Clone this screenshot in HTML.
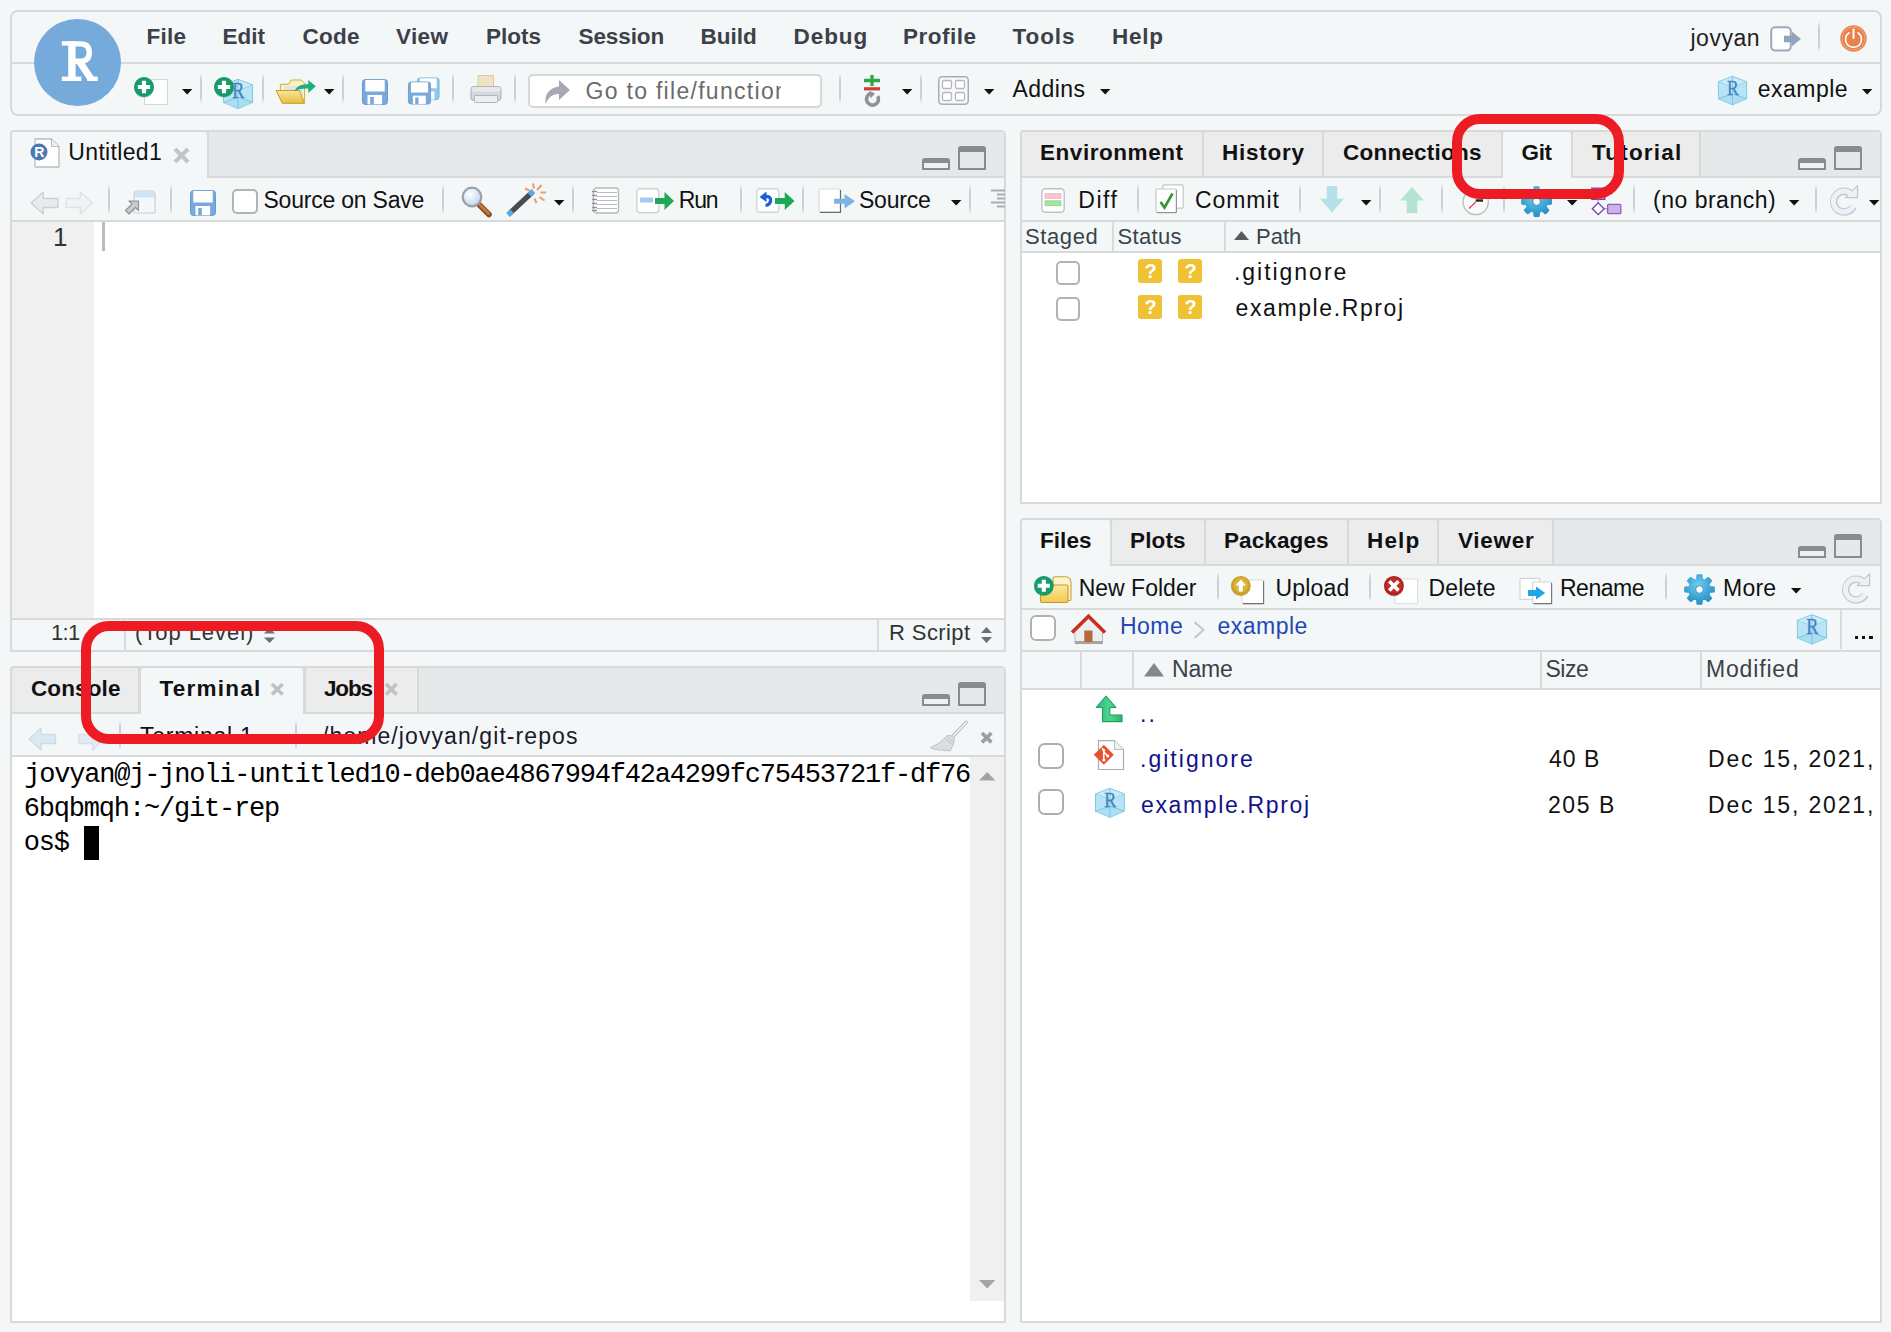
<!DOCTYPE html>
<html><head><meta charset="utf-8"><title>RStudio</title>
<style>
html,body{margin:0;padding:0}
body{width:1891px;height:1332px;background:#f5f6f8;position:relative;overflow:hidden;font-family:"Liberation Sans",sans-serif;}
body>div,body>span,body>svg{position:absolute;box-sizing:border-box;}
span{white-space:pre;display:block}
svg{overflow:visible}
</style></head>
<body>
<div style="left:10px;top:10px;width:1872px;height:106px;background:#f4f7f8;border:2px solid #d6dadb;border-radius:8px;"></div>
<div style="left:12px;top:62px;width:1868px;height:2px;background:#d6dadb;"></div>
<span style="left:146.5px;top:26px;font-size:22.5px;line-height:22.5px;color:#3c4049;font-weight:700;letter-spacing:0.251px;">File</span>
<span style="left:222.5px;top:26px;font-size:22.5px;line-height:22.5px;color:#3c4049;font-weight:700;letter-spacing:-0.001px;">Edit</span>
<span style="left:302.5px;top:26px;font-size:22.5px;line-height:22.5px;color:#3c4049;font-weight:700;letter-spacing:0.254px;">Code</span>
<span style="left:396px;top:26px;font-size:22.5px;line-height:22.5px;color:#3c4049;font-weight:700;letter-spacing:0.378px;">View</span>
<span style="left:486px;top:26px;font-size:22.5px;line-height:22.5px;color:#3c4049;font-weight:700;letter-spacing:0.001px;">Plots</span>
<span style="left:578.5px;top:26px;font-size:22.5px;line-height:22.5px;color:#3c4049;font-weight:700;letter-spacing:-0.09px;">Session</span>
<span style="left:700.5px;top:26px;font-size:22.5px;line-height:22.5px;color:#3c4049;font-weight:700;letter-spacing:0.001px;">Build</span>
<span style="left:793.5px;top:26px;font-size:22.5px;line-height:22.5px;color:#3c4049;font-weight:700;letter-spacing:0.938px;">Debug</span>
<span style="left:903px;top:26px;font-size:22.5px;line-height:22.5px;color:#3c4049;font-weight:700;letter-spacing:0.5px;">Profile</span>
<span style="left:1012.6px;top:26px;font-size:22.5px;line-height:22.5px;color:#3c4049;font-weight:700;letter-spacing:0.897px;">Tools</span>
<span style="left:1112px;top:26px;font-size:22.5px;line-height:22.5px;color:#3c4049;font-weight:700;letter-spacing:0.729px;">Help</span>
<span style="left:1690.5px;top:27px;font-size:23px;line-height:23px;color:#222;letter-spacing:0.501px;">jovyan</span>
<div style="left:1818px;top:21px;width:2px;height:31px;background:linear-gradient(to bottom,rgba(205,208,211,0),#cdd0d3 22%,#cdd0d3 80%,rgba(205,208,211,0));"></div>
<div style="left:34px;top:19px;width:87.4px;height:87.4px;background:#75aadb;border-radius:50%;"></div>
<svg style="left:60px;top:40px;" width="40" height="42" viewBox="0 0 40 42"><g fill="#fff"><rect x="1.8" y="1.2" width="9" height="4.4"/><rect x="8.2" y="1.2" width="7.4" height="39.8"/><rect x="1.8" y="36.6" width="19.6" height="4.4"/><rect x="27.2" y="36.6" width="10.6" height="4.4"/></g><path d="M12 3.9H20.5Q29.3 3.9 29.3 12.6Q29.3 21.3 20.5 21.3H12" fill="none" stroke="#fff" stroke-width="5.4"/><path d="M19.5 21.5L30.8 38.6" stroke="#fff" stroke-width="7"/></svg>
<div style="left:200px;top:73px;width:2px;height:31px;background:linear-gradient(to bottom,rgba(205,208,211,0),#cdd0d3 22%,#cdd0d3 80%,rgba(205,208,211,0));"></div>
<div style="left:262px;top:73px;width:2px;height:31px;background:linear-gradient(to bottom,rgba(205,208,211,0),#cdd0d3 22%,#cdd0d3 80%,rgba(205,208,211,0));"></div>
<div style="left:342px;top:73px;width:2px;height:31px;background:linear-gradient(to bottom,rgba(205,208,211,0),#cdd0d3 22%,#cdd0d3 80%,rgba(205,208,211,0));"></div>
<div style="left:452px;top:73px;width:2px;height:31px;background:linear-gradient(to bottom,rgba(205,208,211,0),#cdd0d3 22%,#cdd0d3 80%,rgba(205,208,211,0));"></div>
<div style="left:514px;top:73px;width:2px;height:31px;background:linear-gradient(to bottom,rgba(205,208,211,0),#cdd0d3 22%,#cdd0d3 80%,rgba(205,208,211,0));"></div>
<div style="left:839px;top:73px;width:2px;height:31px;background:linear-gradient(to bottom,rgba(205,208,211,0),#cdd0d3 22%,#cdd0d3 80%,rgba(205,208,211,0));"></div>
<div style="left:920px;top:73px;width:2px;height:31px;background:linear-gradient(to bottom,rgba(205,208,211,0),#cdd0d3 22%,#cdd0d3 80%,rgba(205,208,211,0));"></div>
<div style="left:528px;top:74px;width:294px;height:34px;background:#fff;border:2px solid #d5d8da;border-radius:5px;"></div>
<span style="left:585.5px;top:80px;font-size:23px;line-height:23px;color:#6b6b6b;letter-spacing:1.294px;width:195.0px;overflow:hidden;">Go to file/function</span>
<span style="left:1012.6px;top:78px;font-size:23px;line-height:23px;color:#111;letter-spacing:0.435px;">Addins</span>
<span style="left:1757.8px;top:78px;font-size:23px;line-height:23px;color:#111;letter-spacing:0.476px;">example</span>
<svg style="left:181.8px;top:89px;" width="10.4" height="5.5" viewBox="0 0 10.4 5.5"><path d="M0 0H10.4L5.2 5.5Z" fill="#111"/></svg>
<svg style="left:323.8px;top:89px;" width="10.4" height="5.5" viewBox="0 0 10.4 5.5"><path d="M0 0H10.4L5.2 5.5Z" fill="#111"/></svg>
<svg style="left:901.8px;top:89px;" width="10.4" height="5.5" viewBox="0 0 10.4 5.5"><path d="M0 0H10.4L5.2 5.5Z" fill="#111"/></svg>
<svg style="left:983.8px;top:89px;" width="10.4" height="5.5" viewBox="0 0 10.4 5.5"><path d="M0 0H10.4L5.2 5.5Z" fill="#111"/></svg>
<svg style="left:1099.8px;top:89px;" width="10.4" height="5.5" viewBox="0 0 10.4 5.5"><path d="M0 0H10.4L5.2 5.5Z" fill="#111"/></svg>
<svg style="left:1861.8px;top:89px;" width="10.4" height="5.5" viewBox="0 0 10.4 5.5"><path d="M0 0H10.4L5.2 5.5Z" fill="#111"/></svg>
<div style="left:10px;top:130px;width:996px;height:522px;background:#fff;border:2px solid #d6dadb;border-radius:5px 5px 0 0;"></div>
<div style="left:12px;top:132px;width:992px;height:46px;background:#e6e8ea;border-radius:3px 3px 0 0;"></div>
<div style="left:12px;top:176px;width:992px;height:2px;background:#d6dadb;"></div>
<div style="left:10px;top:130px;width:199px;height:48px;background:#f4f7f8;border:2px solid #d6dadb;border-radius:4px 4px 0 0;border-bottom:none;"></div>
<span style="left:68.3px;top:141px;font-size:23px;line-height:23px;color:#111;letter-spacing:0.339px;">Untitled1</span>
<div style="left:958px;top:146px;width:28px;height:24px;background:#e5e9ec;border:2px solid #878c8f;border-radius:3px 3px 0 0;border-top:6px solid #878c8f;"></div>
<div style="left:922px;top:158px;width:28px;height:12px;background:#eef0f2;border:2px solid #878c8f;border-radius:3px 3px 0 0;border-top:5.5px solid #878c8f;"></div>
<div style="left:12px;top:178px;width:992px;height:42px;background:#f4f7f8;"></div>
<div style="left:12px;top:220px;width:992px;height:2px;background:#d6dadb;"></div>
<div style="left:108px;top:184px;width:2px;height:30px;background:linear-gradient(to bottom,rgba(205,208,211,0),#cdd0d3 22%,#cdd0d3 80%,rgba(205,208,211,0));"></div>
<div style="left:170px;top:184px;width:2px;height:30px;background:linear-gradient(to bottom,rgba(205,208,211,0),#cdd0d3 22%,#cdd0d3 80%,rgba(205,208,211,0));"></div>
<div style="left:442px;top:184px;width:2px;height:30px;background:linear-gradient(to bottom,rgba(205,208,211,0),#cdd0d3 22%,#cdd0d3 80%,rgba(205,208,211,0));"></div>
<div style="left:572px;top:184px;width:2px;height:30px;background:linear-gradient(to bottom,rgba(205,208,211,0),#cdd0d3 22%,#cdd0d3 80%,rgba(205,208,211,0));"></div>
<div style="left:740px;top:184px;width:2px;height:30px;background:linear-gradient(to bottom,rgba(205,208,211,0),#cdd0d3 22%,#cdd0d3 80%,rgba(205,208,211,0));"></div>
<div style="left:802px;top:184px;width:2px;height:30px;background:linear-gradient(to bottom,rgba(205,208,211,0),#cdd0d3 22%,#cdd0d3 80%,rgba(205,208,211,0));"></div>
<div style="left:969px;top:184px;width:2px;height:30px;background:linear-gradient(to bottom,rgba(205,208,211,0),#cdd0d3 22%,#cdd0d3 80%,rgba(205,208,211,0));"></div>
<span style="left:263.5px;top:189px;font-size:23px;line-height:23px;color:#111;letter-spacing:-0.221px;">Source on Save</span>
<span style="left:678.8px;top:189px;font-size:23px;line-height:23px;color:#111;letter-spacing:-1.201px;">Run</span>
<span style="left:859px;top:189px;font-size:23px;line-height:23px;color:#111;letter-spacing:-0.217px;">Source</span>
<svg style="left:553.8px;top:200px;" width="10.4" height="5.5" viewBox="0 0 10.4 5.5"><path d="M0 0H10.4L5.2 5.5Z" fill="#111"/></svg>
<svg style="left:950.8px;top:200px;" width="10.4" height="5.5" viewBox="0 0 10.4 5.5"><path d="M0 0H10.4L5.2 5.5Z" fill="#111"/></svg>
<div style="left:12px;top:222px;width:82px;height:396px;background:#f0f0f0;"></div>
<span style="left:53px;top:224px;font-size:26px;line-height:26px;color:#333;">1</span>
<div style="left:102px;top:222px;width:3px;height:29px;background:#b9bcbe;"></div>
<div style="left:12px;top:618px;width:992px;height:2px;background:#d6dadb;"></div>
<div style="left:12px;top:620px;width:992px;height:30px;background:#f4f7f8;"></div>
<div style="left:124px;top:620px;width:2px;height:30px;background:#d9dcde;"></div>
<div style="left:877px;top:620px;width:2px;height:30px;background:#d9dcde;"></div>
<span style="left:51px;top:622px;font-size:22px;line-height:22px;color:#333;letter-spacing:-0.674px;">1:1</span>
<span style="left:135px;top:622px;font-size:22px;line-height:22px;color:#333;letter-spacing:0.95px;">(Top Level)</span>
<span style="left:889px;top:622px;font-size:22px;line-height:22px;color:#333;letter-spacing:0.411px;">R Script</span>
<div style="left:10px;top:666px;width:996px;height:657px;background:#fff;border:2px solid #d6dadb;border-radius:5px 5px 0 0;"></div>
<div style="left:12px;top:668px;width:992px;height:46px;background:#e6e8ea;border-radius:3px 3px 0 0;"></div>
<div style="left:12px;top:712px;width:992px;height:2px;background:#d6dadb;"></div>
<div style="left:10px;top:666px;width:130px;height:46px;background:#ececed;border:2px solid #d6dadb;border-radius:4px 4px 0 0;border-bottom:none;"></div>
<div style="left:139px;top:666px;width:166px;height:48px;background:#f4f7f8;border:2px solid #d6dadb;border-radius:4px 4px 0 0;border-bottom:none;"></div>
<div style="left:304px;top:666px;width:115px;height:46px;background:#ececed;border:2px solid #d6dadb;border-radius:4px 4px 0 0;border-bottom:none;"></div>
<span style="left:31px;top:678px;font-size:22.5px;line-height:22.5px;color:#111;font-weight:700;letter-spacing:0.126px;">Console</span>
<span style="left:159.5px;top:678px;font-size:22.5px;line-height:22.5px;color:#111;font-weight:700;letter-spacing:1.235px;">Terminal</span>
<span style="left:324px;top:678px;font-size:22.5px;line-height:22.5px;color:#111;font-weight:700;letter-spacing:-1.167px;">Jobs</span>
<div style="left:958px;top:682px;width:28px;height:24px;background:#e5e9ec;border:2px solid #878c8f;border-radius:3px 3px 0 0;border-top:6px solid #878c8f;"></div>
<div style="left:922px;top:694px;width:28px;height:12px;background:#eef0f2;border:2px solid #878c8f;border-radius:3px 3px 0 0;border-top:5.5px solid #878c8f;"></div>
<div style="left:12px;top:714px;width:992px;height:42px;background:#f4f7f8;"></div>
<div style="left:12px;top:755px;width:992px;height:2px;background:#d6dadb;"></div>
<div style="left:119px;top:720px;width:2px;height:30px;background:linear-gradient(to bottom,rgba(205,208,211,0),#cdd0d3 22%,#cdd0d3 80%,rgba(205,208,211,0));"></div>
<div style="left:295px;top:720px;width:2px;height:30px;background:linear-gradient(to bottom,rgba(205,208,211,0),#cdd0d3 22%,#cdd0d3 80%,rgba(205,208,211,0));"></div>
<span style="left:140px;top:725px;font-size:23px;line-height:23px;color:#111;letter-spacing:0.744px;">Terminal 1</span>
<span style="left:322px;top:725px;font-size:23px;line-height:23px;color:#1a1a2a;letter-spacing:1.087px;">/home/jovyan/git-repos</span>
<span style="left:24.2px;top:762px;font-size:27px;line-height:27px;color:#000;font-family:'Liberation Mono', monospace;letter-spacing:-1.19px;">jovyan@j-jnoli-untitled10-deb0ae4867994f42a4299fc75453721f-df76</span>
<span style="left:23.8px;top:796px;font-size:27px;line-height:27px;color:#000;font-family:'Liberation Mono', monospace;letter-spacing:-1.19px;">6bqbmqh:~/git-rep</span>
<span style="left:23.8px;top:830px;font-size:27px;line-height:27px;color:#000;font-family:'Liberation Mono', monospace;letter-spacing:-1.19px;">os$ </span>
<div style="left:84.2px;top:826px;width:15px;height:34px;background:#000;"></div>
<div style="left:970px;top:757px;width:34px;height:544px;background:#f0f0f0;"></div>
<div style="left:1020px;top:130px;width:862px;height:374px;background:#fff;border:2px solid #d6dadb;border-radius:5px 5px 0 0;"></div>
<div style="left:1022px;top:132px;width:858px;height:46px;background:#e6e8ea;border-radius:3px 3px 0 0;"></div>
<div style="left:1022px;top:176px;width:858px;height:2px;background:#d6dadb;"></div>
<div style="left:1020px;top:130px;width:184px;height:46px;background:#ececed;border:2px solid #d6dadb;border-radius:4px 4px 0 0;border-bottom:none;"></div>
<div style="left:1202px;top:130px;width:122px;height:46px;background:#ececed;border:2px solid #d6dadb;border-radius:4px 4px 0 0;border-bottom:none;"></div>
<div style="left:1322px;top:130px;width:181px;height:46px;background:#ececed;border:2px solid #d6dadb;border-radius:4px 4px 0 0;border-bottom:none;"></div>
<div style="left:1501px;top:130px;width:72px;height:48px;background:#f4f7f8;border:2px solid #d6dadb;border-radius:4px 4px 0 0;border-bottom:none;"></div>
<div style="left:1571px;top:130px;width:130px;height:46px;background:#ececed;border:2px solid #d6dadb;border-radius:4px 4px 0 0;border-bottom:none;"></div>
<span style="left:1040px;top:142px;font-size:22.5px;line-height:22.5px;color:#111;font-weight:700;letter-spacing:0.548px;">Environment</span>
<span style="left:1222px;top:142px;font-size:22.5px;line-height:22.5px;color:#111;font-weight:700;letter-spacing:0.749px;">History</span>
<span style="left:1343px;top:142px;font-size:22.5px;line-height:22.5px;color:#111;font-weight:700;letter-spacing:0.226px;">Connections</span>
<span style="left:1521.5px;top:142px;font-size:22.5px;line-height:22.5px;color:#111;font-weight:700;letter-spacing:-0.376px;">Git</span>
<span style="left:1592px;top:142px;font-size:22.5px;line-height:22.5px;color:#111;font-weight:700;letter-spacing:1.204px;">Tutorial</span>
<div style="left:1834px;top:146px;width:28px;height:24px;background:#e5e9ec;border:2px solid #878c8f;border-radius:3px 3px 0 0;border-top:6px solid #878c8f;"></div>
<div style="left:1798px;top:158px;width:28px;height:12px;background:#eef0f2;border:2px solid #878c8f;border-radius:3px 3px 0 0;border-top:5.5px solid #878c8f;"></div>
<div style="left:1022px;top:178px;width:858px;height:42px;background:#f4f7f8;"></div>
<div style="left:1022px;top:220px;width:858px;height:2px;background:#d6dadb;"></div>
<div style="left:1137px;top:184px;width:2px;height:30px;background:linear-gradient(to bottom,rgba(205,208,211,0),#cdd0d3 22%,#cdd0d3 80%,rgba(205,208,211,0));"></div>
<div style="left:1299px;top:184px;width:2px;height:30px;background:linear-gradient(to bottom,rgba(205,208,211,0),#cdd0d3 22%,#cdd0d3 80%,rgba(205,208,211,0));"></div>
<div style="left:1379px;top:184px;width:2px;height:30px;background:linear-gradient(to bottom,rgba(205,208,211,0),#cdd0d3 22%,#cdd0d3 80%,rgba(205,208,211,0));"></div>
<div style="left:1441px;top:184px;width:2px;height:30px;background:linear-gradient(to bottom,rgba(205,208,211,0),#cdd0d3 22%,#cdd0d3 80%,rgba(205,208,211,0));"></div>
<div style="left:1503px;top:184px;width:2px;height:30px;background:linear-gradient(to bottom,rgba(205,208,211,0),#cdd0d3 22%,#cdd0d3 80%,rgba(205,208,211,0));"></div>
<div style="left:1633px;top:184px;width:2px;height:30px;background:linear-gradient(to bottom,rgba(205,208,211,0),#cdd0d3 22%,#cdd0d3 80%,rgba(205,208,211,0));"></div>
<div style="left:1815px;top:184px;width:2px;height:30px;background:linear-gradient(to bottom,rgba(205,208,211,0),#cdd0d3 22%,#cdd0d3 80%,rgba(205,208,211,0));"></div>
<span style="left:1078.3px;top:189px;font-size:23px;line-height:23px;color:#111;letter-spacing:1.535px;">Diff</span>
<span style="left:1195px;top:189px;font-size:23px;line-height:23px;color:#111;letter-spacing:0.934px;">Commit</span>
<span style="left:1653px;top:189px;font-size:23px;line-height:23px;color:#111;letter-spacing:0.504px;">(no branch)</span>
<svg style="left:1360.8px;top:200px;" width="10.4" height="5.5" viewBox="0 0 10.4 5.5"><path d="M0 0H10.4L5.2 5.5Z" fill="#111"/></svg>
<svg style="left:1566.8px;top:200px;" width="10.4" height="5.5" viewBox="0 0 10.4 5.5"><path d="M0 0H10.4L5.2 5.5Z" fill="#111"/></svg>
<svg style="left:1788.8px;top:200px;" width="10.4" height="5.5" viewBox="0 0 10.4 5.5"><path d="M0 0H10.4L5.2 5.5Z" fill="#111"/></svg>
<svg style="left:1868.8px;top:200px;" width="10.4" height="5.5" viewBox="0 0 10.4 5.5"><path d="M0 0H10.4L5.2 5.5Z" fill="#111"/></svg>
<div style="left:1022px;top:222px;width:858px;height:29px;background:#f4f7f8;"></div>
<div style="left:1022px;top:251px;width:858px;height:2px;background:#d6dadb;"></div>
<div style="left:1112px;top:222px;width:2px;height:29px;background:#d9dcde;"></div>
<div style="left:1224px;top:222px;width:2px;height:29px;background:#d9dcde;"></div>
<span style="left:1025px;top:226px;font-size:22px;line-height:22px;color:#3c4248;letter-spacing:0.602px;">Staged</span>
<span style="left:1117.5px;top:226px;font-size:22px;line-height:22px;color:#3c4248;letter-spacing:0.326px;">Status</span>
<span style="left:1256px;top:226px;font-size:22px;line-height:22px;color:#3c4248;letter-spacing:-0.007px;">Path</span>
<span style="left:1234px;top:261px;font-size:23px;line-height:23px;color:#111;letter-spacing:1.964px;">.gitignore</span>
<span style="left:1235.5px;top:297px;font-size:23px;line-height:23px;color:#111;letter-spacing:1.61px;">example.Rproj</span>
<div style="left:1020px;top:518px;width:862px;height:805px;background:#fff;border:2px solid #d6dadb;border-radius:5px 5px 0 0;"></div>
<div style="left:1022px;top:520px;width:858px;height:46px;background:#e6e8ea;border-radius:3px 3px 0 0;"></div>
<div style="left:1022px;top:564px;width:858px;height:2px;background:#d6dadb;"></div>
<div style="left:1020px;top:518px;width:92px;height:48px;background:#f4f7f8;border:2px solid #d6dadb;border-radius:4px 4px 0 0;border-bottom:none;"></div>
<div style="left:1110px;top:518px;width:96px;height:46px;background:#ececed;border:2px solid #d6dadb;border-radius:4px 4px 0 0;border-bottom:none;"></div>
<div style="left:1204px;top:518px;width:145px;height:46px;background:#ececed;border:2px solid #d6dadb;border-radius:4px 4px 0 0;border-bottom:none;"></div>
<div style="left:1347px;top:518px;width:92px;height:46px;background:#ececed;border:2px solid #d6dadb;border-radius:4px 4px 0 0;border-bottom:none;"></div>
<div style="left:1437px;top:518px;width:117px;height:46px;background:#ececed;border:2px solid #d6dadb;border-radius:4px 4px 0 0;border-bottom:none;"></div>
<span style="left:1040px;top:530px;font-size:22.5px;line-height:22.5px;color:#111;font-weight:700;letter-spacing:0.06px;">Files</span>
<span style="left:1130px;top:530px;font-size:22.5px;line-height:22.5px;color:#111;font-weight:700;letter-spacing:0.126px;">Plots</span>
<span style="left:1224px;top:530px;font-size:22.5px;line-height:22.5px;color:#111;font-weight:700;letter-spacing:0.097px;">Packages</span>
<span style="left:1367px;top:530px;font-size:22.5px;line-height:22.5px;color:#111;font-weight:700;letter-spacing:1.162px;">Help</span>
<span style="left:1458px;top:530px;font-size:22.5px;line-height:22.5px;color:#111;font-weight:700;letter-spacing:0.724px;">Viewer</span>
<div style="left:1834px;top:534px;width:28px;height:24px;background:#e5e9ec;border:2px solid #878c8f;border-radius:3px 3px 0 0;border-top:6px solid #878c8f;"></div>
<div style="left:1798px;top:546px;width:28px;height:12px;background:#eef0f2;border:2px solid #878c8f;border-radius:3px 3px 0 0;border-top:5.5px solid #878c8f;"></div>
<div style="left:1022px;top:566px;width:858px;height:42px;background:#f4f7f8;"></div>
<div style="left:1022px;top:608px;width:858px;height:2px;background:#d6dadb;"></div>
<div style="left:1217px;top:572px;width:2px;height:30px;background:linear-gradient(to bottom,rgba(205,208,211,0),#cdd0d3 22%,#cdd0d3 80%,rgba(205,208,211,0));"></div>
<div style="left:1369px;top:572px;width:2px;height:30px;background:linear-gradient(to bottom,rgba(205,208,211,0),#cdd0d3 22%,#cdd0d3 80%,rgba(205,208,211,0));"></div>
<div style="left:1665px;top:572px;width:2px;height:30px;background:linear-gradient(to bottom,rgba(205,208,211,0),#cdd0d3 22%,#cdd0d3 80%,rgba(205,208,211,0));"></div>
<span style="left:1078.7px;top:577px;font-size:23px;line-height:23px;color:#111;letter-spacing:0.007px;">New Folder</span>
<span style="left:1275.5px;top:577px;font-size:23px;line-height:23px;color:#111;letter-spacing:0.181px;">Upload</span>
<span style="left:1428.5px;top:577px;font-size:23px;line-height:23px;color:#111;letter-spacing:0.121px;">Delete</span>
<span style="left:1560px;top:577px;font-size:23px;line-height:23px;color:#111;letter-spacing:-0.489px;">Rename</span>
<span style="left:1723px;top:577px;font-size:23px;line-height:23px;color:#111;letter-spacing:0.23px;">More</span>
<svg style="left:1790.8px;top:588px;" width="10.4" height="5.5" viewBox="0 0 10.4 5.5"><path d="M0 0H10.4L5.2 5.5Z" fill="#111"/></svg>
<div style="left:1022px;top:610px;width:858px;height:40px;background:#f4f7f8;"></div>
<div style="left:1022px;top:650px;width:858px;height:2px;background:#d6dadb;"></div>
<div style="left:1840px;top:610px;width:2px;height:39px;background:#d9dcde;"></div>
<span style="left:1120px;top:615px;font-size:23px;line-height:23px;color:#2448b4;letter-spacing:0.48px;">Home</span>
<span style="left:1217.5px;top:615px;font-size:23px;line-height:23px;color:#2448b4;letter-spacing:0.476px;">example</span>
<div style="left:1854.5px;top:635.5px;width:3.5px;height:3.7px;background:#111;"></div>
<div style="left:1861.8px;top:635.5px;width:3.5px;height:3.7px;background:#111;"></div>
<div style="left:1869px;top:635.5px;width:3.5px;height:3.7px;background:#111;"></div>
<div style="left:1022px;top:652px;width:858px;height:36px;background:#f4f7f8;"></div>
<div style="left:1022px;top:688px;width:858px;height:2px;background:#d6dadb;"></div>
<div style="left:1080px;top:651px;width:2px;height:37px;background:#d9dcde;"></div>
<div style="left:1132px;top:651px;width:2px;height:37px;background:#d9dcde;"></div>
<div style="left:1540px;top:651px;width:2px;height:37px;background:#d9dcde;"></div>
<div style="left:1700px;top:651px;width:2px;height:37px;background:#d9dcde;"></div>
<span style="left:1172px;top:658px;font-size:23px;line-height:23px;color:#3c4248;letter-spacing:-0.187px;">Name</span>
<span style="left:1545.5px;top:658px;font-size:23px;line-height:23px;color:#3c4248;letter-spacing:-0.484px;">Size</span>
<span style="left:1706px;top:658px;font-size:23px;line-height:23px;color:#3c4248;letter-spacing:0.837px;">Modified</span>
<span style="left:1140px;top:703px;font-size:23px;line-height:23px;color:#12128a;letter-spacing:2.11px;">..</span>
<span style="left:1140px;top:748px;font-size:23px;line-height:23px;color:#12128a;letter-spacing:2.019px;">.gitignore</span>
<span style="left:1141px;top:794px;font-size:23px;line-height:23px;color:#12128a;letter-spacing:1.652px;">example.Rproj</span>
<span style="left:1549px;top:748px;font-size:23px;line-height:23px;color:#111;letter-spacing:1.009px;">40 B</span>
<span style="left:1548px;top:794px;font-size:23px;line-height:23px;color:#111;letter-spacing:1.559px;">205 B</span>
<span style="left:1708px;top:748px;font-size:23px;line-height:23px;color:#111;letter-spacing:1.848px;">Dec 15, 2021,</span>
<span style="left:1708px;top:794px;font-size:23px;line-height:23px;color:#111;letter-spacing:1.848px;">Dec 15, 2021,</span>
<div style="left:144px;top:79px;width:24px;height:26px;background:#fff;border:1.5px solid #d4d7da;"></div>
<svg style="left:133px;top:75.5px;" width="22" height="22" viewBox="0 0 22 22"><circle cx="11" cy="11.6" r="10" fill="#0b6b48" opacity=".35"/><circle cx="11" cy="11" r="10" fill="#149c6a"/><path d="M4.8 11H17.2M11 4.8V17.2" stroke="#fff" stroke-width="4.2"/></svg>
<svg style="left:223px;top:79px;" width="30" height="30" viewBox="0 0 29.6 29.8"><path d="M14.8 .4L29.2 5.9V23.3L14.8 29.4L.4 23.3V5.9Z" fill="#b9e4f7" stroke="#74c4de" stroke-width=".9" stroke-linejoin="round"/><path d="M14.8 .4L29.2 5.9L14.8 11.6L.4 5.9Z" fill="#c9ebf9" stroke="#7fc9e1" stroke-width=".6"/><path d="M.4 23.3L14.8 18L29.2 23.3L14.8 29.4Z" fill="#a5dbf1" opacity=".7"/><path d="M14.8 .4V29.4M.4 23.3L14.8 18L29.2 23.3" fill="none" stroke="#6cc0da" stroke-width=".8"/><text transform="translate(15.2 19) scale(.82 1)" font-family="Liberation Serif,serif" font-size="22" text-anchor="middle" fill="#3a7bbd" stroke="#3a7bbd" stroke-width=".35" opacity=".92">R</text></svg>
<svg style="left:212.5px;top:75.5px;" width="22" height="22" viewBox="0 0 22 22"><circle cx="11" cy="11.6" r="10" fill="#0b6b48" opacity=".35"/><circle cx="11" cy="11" r="10" fill="#149c6a"/><path d="M4.8 11H17.2M11 4.8V17.2" stroke="#fff" stroke-width="4.2"/></svg>
<svg style="left:275px;top:78px;" width="42" height="28" viewBox="0 0 42 28"><defs><linearGradient id="ofg" x1="0" y1="0" x2="0" y2="1"><stop offset="0" stop-color="#f8e59a"/><stop offset="1" stop-color="#e9bd3f"/></linearGradient></defs><path d="M5.4 13V6.3H13.5L16.3 2H26.3L29.6 5.3V23.4H8Z" fill="#fcf1c4" stroke="#d0aa3c" stroke-width="1" stroke-linejoin="round"/><path d="M9.5 8H27.8V22H9.5Z" fill="#e2e3e6"/><path d="M1.1 12.5H24.4L29.6 25.3H7.3Z" fill="url(#ofg)" stroke="#c39b2f" stroke-width="1" stroke-linejoin="round"/><path d="M19.2 13.2Q22.5 5.6 33.3 6.3V2L40.8 8.3L33.3 14.9V10.6Q25 9.6 19.2 13.2Z" fill="#1fae7d"/></svg>
<svg style="left:362px;top:79px;" width="26" height="26" viewBox="0 0 26 26"><rect x=".5" y=".5" width="25" height="25" rx="3" fill="#78a8dc" stroke="#6a99d0" stroke-width="1"/><rect x="3.3" y=".9" width="19.4" height="11.6" fill="#fff"/><rect x="5.5" y="16" width="14.6" height="9.4" fill="#fdfeff"/><rect x="8.2" y="18" width="3.6" height="7.4" fill="#78a8dc"/></svg>
<svg style="left:416.8px;top:77px;" width="22.5" height="23.5" viewBox="0 0 26 26"><rect x=".5" y=".5" width="25" height="25" rx="3" fill="#8ccaee" stroke="#6db4de" stroke-width="1"/><rect x="3.3" y=".9" width="19.4" height="11.6" fill="#fff"/><rect x="5.5" y="16" width="14.6" height="9.4" fill="#fdfeff"/><rect x="8.2" y="18" width="3.6" height="7.4" fill="#8ccaee"/></svg>
<svg style="left:408.2px;top:81px;" width="23" height="24" viewBox="0 0 26 26"><rect x=".5" y=".5" width="25" height="25" rx="3" fill="#78a8dc" stroke="#6a99d0" stroke-width="1"/><rect x="3.3" y=".9" width="19.4" height="11.6" fill="#fff"/><rect x="5.5" y="16" width="14.6" height="9.4" fill="#fdfeff"/><rect x="8.2" y="18" width="3.6" height="7.4" fill="#78a8dc"/></svg>
<svg style="left:470px;top:74px;" width="32" height="30" viewBox="0 0 32 30"><path d="M8 1.5H23.5V14H8Z" fill="#efe3c3" stroke="#d8cba6" stroke-width="1"/><rect x="1" y="12.5" width="30" height="14" rx="3.5" fill="#d5d8dd" stroke="#b3b7bd" stroke-width="1.2"/><rect x="1.6" y="13" width="28.8" height="5" rx="2.5" fill="#e6e8ec"/><path d="M4.5 21.5H27.5V27.5Q27.5 28.5 26.5 28.5H5.5Q4.5 28.5 4.5 27.5Z" fill="#eceef1" stroke="#b3b7bd" stroke-width="1"/></svg>
<svg style="left:543px;top:79px;" width="28" height="26" viewBox="0 0 28 26"><path d="M16 1L27 11L16 21V15Q7 14 2.5 25Q1 10 16 7.5Z" fill="#a6a9b3"/></svg>
<svg style="left:862px;top:74px;" width="20" height="34" viewBox="0 0 20 34"><path d="M2 6.5H18M10 1V12" stroke="#2aa84a" stroke-width="3.4"/><path d="M2 14.8H18" stroke="#d63a34" stroke-width="3.2"/><path d="M15.8 22.2A6 6 0 1 1 9 19.3" fill="none" stroke="#8d9299" stroke-width="3.6"/><path d="M7.5 17L13 19.5L8.5 24.5Z" fill="#8d9299"/></svg>
<svg style="left:938px;top:76px;" width="31" height="29" viewBox="0 0 31 29"><rect x=".75" y=".75" width="29.5" height="27.5" rx="3.5" fill="#f7f8f9" stroke="#a9adb2" stroke-width="1.5"/><rect x="4.5" y="4.5" width="9" height="8" rx="1.5" fill="#fff" stroke="#b4b8bc" stroke-width="1.3"/><rect x="17.5" y="4.5" width="9" height="8" rx="1.5" fill="#fff" stroke="#b4b8bc" stroke-width="1.3"/><rect x="4.5" y="16.5" width="9" height="8" rx="1.5" fill="#fff" stroke="#b4b8bc" stroke-width="1.3"/><rect x="17.5" y="16.5" width="9" height="8" rx="1.5" fill="#fff" stroke="#b4b8bc" stroke-width="1.3"/></svg>
<svg style="left:1718px;top:75.5px;" width="29" height="29.2" viewBox="0 0 29.6 29.8"><path d="M14.8 .4L29.2 5.9V23.3L14.8 29.4L.4 23.3V5.9Z" fill="#b9e4f7" stroke="#74c4de" stroke-width=".9" stroke-linejoin="round"/><path d="M14.8 .4L29.2 5.9L14.8 11.6L.4 5.9Z" fill="#c9ebf9" stroke="#7fc9e1" stroke-width=".6"/><path d="M.4 23.3L14.8 18L29.2 23.3L14.8 29.4Z" fill="#a5dbf1" opacity=".7"/><path d="M14.8 .4V29.4M.4 23.3L14.8 18L29.2 23.3" fill="none" stroke="#6cc0da" stroke-width=".8"/><text transform="translate(15.2 19) scale(.82 1)" font-family="Liberation Serif,serif" font-size="22" text-anchor="middle" fill="#3a7bbd" stroke="#3a7bbd" stroke-width=".35" opacity=".92">R</text></svg>
<svg style="left:34px;top:138px;" width="26" height="30" viewBox="0 0 26 30"><path d="M1 1H17.5L25 8.5V29H1Z" fill="#fff" stroke="#b9bcc0" stroke-width="1.3" stroke-linejoin="round"/><path d="M17.5 1V8.5H25" fill="#eef0f2" stroke="#b9bcc0" stroke-width="1.1" stroke-linejoin="round"/></svg>
<svg style="left:30px;top:143px;" width="18" height="18" viewBox="0 0 18 18"><circle cx="9" cy="9" r="8.5" fill="#4b78b4"/><text x="9.2" y="14" font-family="Liberation Sans,sans-serif" font-weight="700" font-size="14" text-anchor="middle" fill="#fff">R</text></svg>
<svg style="left:172.5px;top:146.5px;" width="17.0" height="17.0" viewBox="0 0 17.0 17.0"><path d="M2 2L15.0 15.0M15.0 2L2 15.0" stroke="#c2c5c7" stroke-width="4"/></svg>
<svg style="left:30px;top:191px;" width="29" height="24" viewBox="0 0 29 24"><path d="M1 12.0L13.34 1V7.48H28V16.52H13.34V23Z" fill="#e8eaeb" stroke="#cdd0d2" stroke-width="1.3" stroke-linejoin="round"/></svg>
<svg style="left:65px;top:191px;" width="28.5" height="24" viewBox="0 0 28.5 24"><path d="M1 12.0L13.110000000000001 1V7.48H27.5V16.52H13.110000000000001V23Z" fill="#f0f2f3" stroke="#dfe2e4" stroke-width="1.3" stroke-linejoin="round" transform="translate(28.5,0) scale(-1,1)"/></svg>
<svg style="left:124px;top:190px;" width="32" height="24" viewBox="0 0 32 24"><path d="M10 5Q10 1 14 1H27Q31 1 31 5V22Q31 23 30 23H11Q10 23 10 22Z" fill="#f4f8fc" stroke="#c3cdd8" stroke-width="1.2"/><path d="M10.6 7.5V5Q10.6 1.6 14 1.6H27Q30.4 1.6 30.4 5V7.5Z" fill="#cfe2f6"/><path d="M1.5 20.5L8 14L5 11H14.5V20.5L11.5 17.5L5 24Z" fill="#c9cccf" stroke="#8d9196" stroke-width="1.1" stroke-linejoin="round"/></svg>
<svg style="left:190px;top:190px;" width="26" height="26" viewBox="0 0 26 26"><rect x=".5" y=".5" width="25" height="25" rx="3" fill="#78a8dc" stroke="#6a99d0" stroke-width="1"/><rect x="3.3" y=".9" width="19.4" height="11.6" fill="#fff"/><rect x="5.5" y="16" width="14.6" height="9.4" fill="#fdfeff"/><rect x="8.2" y="18" width="3.6" height="7.4" fill="#78a8dc"/></svg>
<div style="left:232px;top:188.5px;width:25.5px;height:25.5px;background:#fff;border:2px solid #b3b3b3;border-radius:5px;"></div>
<svg style="left:460px;top:185px;" width="34" height="34" viewBox="0 0 34 34"><defs><radialGradient id="lens" cx=".4" cy=".35" r=".7"><stop offset="0" stop-color="#fff"/><stop offset="1" stop-color="#bcd4ec"/></radialGradient></defs><path d="M19.5 20L29 29.5" stroke="#8a4a1c" stroke-width="5.6" stroke-linecap="round"/><path d="M20 20L28.5 28.5" stroke="#c9783a" stroke-width="3" stroke-linecap="round"/><circle cx="12" cy="12" r="9.3" fill="url(#lens)" stroke="#97a1ac" stroke-width="2.2"/></svg>
<svg style="left:505px;top:183px;" width="42" height="34" viewBox="0 0 42 34"><path d="M4.5 30.5L27 9.5" stroke="#474c52" stroke-width="5.2"/><path d="M3 32L7 28.2" stroke="#5aa9e0" stroke-width="5.2"/><path d="M24.5 11.8L28.5 8" stroke="#5aa9e0" stroke-width="5.2"/><path d="M28 0.5L29 5.5M36.5 2L32 7M41 9.5H35.5M39.5 17.5L34.5 14M29.5 15.5L31.5 20M20 5.5L24.5 7.5" stroke="#ee9b6d" stroke-width="2"/></svg>
<svg style="left:591px;top:187px;" width="29" height="27" viewBox="0 0 29 27"><rect x="2.5" y="1" width="25" height="25" rx="3" fill="#fff" stroke="#b5b8bb" stroke-width="1.3"/><path d="M6 5.5H26M6 9.5H26M6 13.5H26M6 17.5H26M6 21.5H26" stroke="#b9bcc0" stroke-width="1"/><path d="M1 4.5H6M1 8.5H6M1 12.5H6M1 16.5H6M1 20.5H6M1 23.5H6" stroke="#8f9397" stroke-width="1.6"/></svg>
<svg style="left:636px;top:188px;" width="24" height="26" viewBox="0 0 24 26"><rect x=".8" y=".8" width="22" height="24" rx="3" fill="#fff" stroke="#cfd2d5" stroke-width="1.4"/><rect x="4" y="9.5" width="13" height="5" fill="#a9c8f0"/></svg>
<svg style="left:655px;top:192px;" width="19" height="18" viewBox="0 0 19 18"><path d="M0 5.94H9.5V0L19 9.0L9.5 18V12.06H0Z" fill="#1fa85a"/></svg>
<svg style="left:756px;top:188px;" width="24" height="25" viewBox="0 0 24 25"><rect x=".8" y=".8" width="22" height="23.4" rx="3" fill="#fff" stroke="#d2d5d8" stroke-width="1.4"/><path d="M8 8.5Q15.5 7.5 14.5 13.5Q13.5 17 9.5 17.5" fill="none" stroke="#1b5fd2" stroke-width="3.2"/><path d="M3.5 9L10.5 3.5V14Z" fill="#1b5fd2"/></svg>
<svg style="left:775px;top:192px;" width="19.5" height="18" viewBox="0 0 19.5 18"><path d="M0 5.94H9.75V0L19.5 9.0L9.75 18V12.06H0Z" fill="#1fa85a"/></svg>
<svg style="left:818px;top:188px;" width="38" height="26" viewBox="0 0 38 26"><rect x="1" y="1" width="21.5" height="23.4" rx="1.5" fill="#fff" stroke="#d9dcde" stroke-width="1.2"/><path d="M22.5 2V24.4H2" fill="none" stroke="#6a6d70" stroke-width="1.2"/></svg>
<svg style="left:834px;top:194px;" width="21" height="14.5" viewBox="0 0 21 14.5"><path d="M0 4.785H10.5V0L21 7.25L10.5 14.5V9.715H0Z" fill="#7db2e4"/></svg>
<svg style="left:991px;top:189px;" width="14" height="20" viewBox="0 0 14 20"><path d="M0 1.5H14M6 5.5H14M6 9.5H14M0 13.5H14M6 17.5H14" stroke="#a9acaf" stroke-width="2"/></svg>
<svg style="left:1041px;top:188px;" width="24" height="25" viewBox="0 0 24 25"><rect x=".8" y=".8" width="22.4" height="23.4" rx="3.5" fill="#fff" stroke="#bfc2c5" stroke-width="1.4"/><rect x="4" y="5.5" width="16" height="5" fill="#f9c6cf" stroke="#eaa9b5" stroke-width=".6"/><rect x="4" y="12.8" width="16" height="5" fill="#a6e3a1" stroke="#7fcf7a" stroke-width=".6"/></svg>
<svg style="left:1155px;top:184px;" width="29" height="30" viewBox="0 0 29 30"><rect x="7.8" y=".8" width="20.4" height="23.4" rx="1.5" fill="#fff" stroke="#c4c7ca" stroke-width="1.2"/><rect x="1" y="5" width="20.4" height="23.6" rx="1.5" fill="#fff" stroke="#c4c7ca" stroke-width="1.2"/><path d="M21.4 6V28.6H2" fill="none" stroke="#8c8f92" stroke-width="1"/><path d="M5.5 18L9.5 23.5L17.5 9.5" fill="none" stroke="#2e9a35" stroke-width="2.6"/></svg>
<svg style="left:1320px;top:186px;" width="24" height="26.5" viewBox="0 0 24 26.5"><path d="M6.720000000000001 0H17.28V12.719999999999999H24L12.0 26.5L0 12.719999999999999H6.720000000000001Z" fill="#b6e0ea"/></svg>
<svg style="left:1400px;top:186.5px;" width="24" height="26" viewBox="0 0 24 26"><path d="M6.720000000000001 0H17.28V12.48H24L12.0 26L0 12.48H6.720000000000001Z" fill="#b3e4d2" transform="translate(0,26) scale(1,-1)"/></svg>
<svg style="left:1461px;top:188px;" width="30" height="30" viewBox="0 0 30 30"><circle cx="14.7" cy="14" r="12.6" fill="#fbfbfb" stroke="#bdbfc2" stroke-width="1.4"/><path d="M14.7 14L8 20.5" stroke="#e8505a" stroke-width="1.6"/><path d="M14.7 12.5H22" stroke="#222" stroke-width="2.4"/></svg>
<svg style="left:1520.4px;top:185.0px;" width="33.2" height="33.2" viewBox="0 0 33.2 33.2"><defs><radialGradient id="gg1537" cx=".45" cy=".35" r=".75"><stop offset="0" stop-color="#6fd0ee"/><stop offset=".6" stop-color="#3aa3d4"/><stop offset="1" stop-color="#2b86bd"/></radialGradient></defs><path d="M14.20 6.59L14.68 2.33L18.52 2.33L19.00 6.59L21.98 7.82L25.34 5.15L28.05 7.86L25.38 11.22L26.61 14.20L30.87 14.68L30.87 18.52L26.61 19.00L25.38 21.98L28.05 25.34L25.34 28.05L21.98 25.38L19.00 26.61L18.52 30.87L14.68 30.87L14.20 26.61L11.22 25.38L7.86 28.05L5.15 25.34L7.82 21.98L6.59 19.00L2.33 18.52L2.33 14.68L6.59 14.20L7.82 11.22L5.15 7.86L7.86 5.15L11.22 7.82Z" fill="url(#gg1537)" stroke="url(#gg1537)" stroke-width="2.4" stroke-linejoin="round"/><circle cx="16.6" cy="16.6" r="3.90" fill="#f6fafc" stroke="#2a7fb2" stroke-width=".9"/></svg>
<svg style="left:1590px;top:186px;" width="33" height="30" viewBox="0 0 33 30"><rect x="1.8" y="2.2" width="13" height="11.2" fill="#c9b0e6" stroke="#7d3f9e" stroke-width="1.3"/><path d="M8.2 13.4V17M14 22.8H17.5" stroke="#b9a6d6" stroke-width="1.4"/><path d="M8.2 16.9L14.1 22.8L8.2 28.7L2.3 22.8Z" fill="#fdfdff" stroke="#6a3fa8" stroke-width="1.3"/><rect x="17.6" y="18.3" width="13.2" height="9.4" rx="1" fill="#cbb3e8" stroke="#8a5fc4" stroke-width="1.3"/></svg>
<svg style="left:1829px;top:185px;" width="30" height="30" viewBox="0 0 30 30"><path d="M22.4 9.2A10.4 10.4 0 1 0 24.3 21.5" fill="none" stroke="#c2c6d1" stroke-width="7.4"/><path d="M16.3 12.6H28.6V.6Z" fill="#eceef3" stroke="#c2c6d1" stroke-width="1.3" stroke-linejoin="round"/><path d="M22.6 9.6A10.4 10.4 0 1 0 24.1 21.1" fill="none" stroke="#eef0f5" stroke-width="5"/><path d="M18.5 11.6H27.6V3Z" fill="#eef0f5"/></svg>
<svg style="left:1233.5px;top:231px;" width="15" height="9" viewBox="0 0 15 9"><path d="M0 9H15L7.5 0Z" fill="#555b61"/></svg>
<div style="left:1055.8px;top:261px;width:24px;height:24px;background:#fff;border:2px solid #b3b3b3;border-radius:5px;"></div>
<div style="left:1055.8px;top:297px;width:24px;height:24px;background:#fff;border:2px solid #b3b3b3;border-radius:5px;"></div>
<div style="left:1138px;top:259px;width:24px;height:24px;background:#f0c133;border-radius:3px;"></div>
<span style="left:1144.5px;top:261px;font-size:20px;line-height:20px;color:#fff;font-weight:700;">?</span>
<div style="left:1178px;top:259px;width:24px;height:24px;background:#f0c133;border-radius:3px;"></div>
<span style="left:1184.5px;top:261px;font-size:20px;line-height:20px;color:#fff;font-weight:700;">?</span>
<div style="left:1138px;top:295px;width:24px;height:24px;background:#f0c133;border-radius:3px;"></div>
<span style="left:1144.5px;top:297px;font-size:20px;line-height:20px;color:#fff;font-weight:700;">?</span>
<div style="left:1178px;top:295px;width:24px;height:24px;background:#f0c133;border-radius:3px;"></div>
<span style="left:1184.5px;top:297px;font-size:20px;line-height:20px;color:#fff;font-weight:700;">?</span>
<svg style="left:1039px;top:575px;" width="34" height="29" viewBox="0 0 34 29"><defs><linearGradient id="fold" x1="0" y1="0" x2="0" y2="1"><stop offset="0" stop-color="#fbe9a0"/><stop offset="1" stop-color="#f3c94a"/></linearGradient></defs><path d="M14 3.5Q14 1.8 16 1.8H27Q32 2.5 32 8V24Q32 25.5 30.5 25.5H14Z" fill="#fdf3c9" stroke="#c6a23a" stroke-width="1.1"/><path d="M1.5 11.5Q1.5 10 3 10H27.5Q29 10 29 11.5V26Q29 27.5 27.5 27.5H3Q1.5 27.5 1.5 26Z" fill="url(#fold)" stroke="#c29a2c" stroke-width="1.1"/></svg>
<svg style="left:1033.2px;top:575.0px;" width="21.6" height="21.6" viewBox="0 0 21.6 21.6"><circle cx="10.8" cy="11.4" r="9.8" fill="#0b6b48" opacity=".35"/><circle cx="10.8" cy="10.8" r="9.8" fill="#149c6a"/><path d="M4.724 10.8H16.876M10.8 4.724V16.876" stroke="#fff" stroke-width="4.1160000000000005"/></svg>
<svg style="left:1241px;top:579px;" width="24" height="26" viewBox="0 0 24 26"><rect x="1" y="1" width="21.6" height="23.6" fill="#fff" stroke="#dcdfe1" stroke-width="1.2"/><path d="M22.6 2V24.6H2" fill="none" stroke="#6f7275" stroke-width="1.1"/></svg>
<svg style="left:1230px;top:575px;" width="22" height="22" viewBox="0 0 22 22"><circle cx="10.8" cy="11.4" r="9.8" fill="#7a5d10" opacity=".35"/><circle cx="10.8" cy="10.8" r="9.8" fill="#c9a227"/><circle cx="10.8" cy="10.2" r="7.5" fill="#d8b43a"/><path d="M10.8 4.5L16 10.5H12.8V16.5H8.8V10.5H5.6Z" fill="#fff"/></svg>
<svg style="left:1394px;top:578px;" width="25" height="27" viewBox="0 0 25 27"><rect x="1" y="1" width="22.6" height="24.6" fill="#fff" stroke="#dfe2e4" stroke-width="1.2"/></svg>
<svg style="left:1383px;top:575px;" width="22" height="22" viewBox="0 0 22 22"><circle cx="10.9" cy="11.5" r="9.9" fill="#5a0d0d" opacity=".3"/><circle cx="10.9" cy="10.8" r="9.9" fill="#b2211f"/><circle cx="10.9" cy="10.2" r="7.8" fill="#c22d29"/><path d="M6.3 6.2L15.5 15.4M15.5 6.2L6.3 15.4" stroke="#fff" stroke-width="3.6"/></svg>
<svg style="left:1519px;top:577px;" width="34" height="28" viewBox="0 0 34 28"><rect x="1" y="1.4" width="19.6" height="21" rx="1" fill="#fff" stroke="#d3d6d9" stroke-width="1.2"/><rect x="13.6" y="5" width="19" height="21.6" rx="1" fill="#fff" stroke="#d3d6d9" stroke-width="1.2"/><path d="M32.6 6V26.6H14.6" fill="none" stroke="#74777a" stroke-width="1.1"/><path d="M9 13H17V9.6L26.2 16L17 22.4V19H9Z" fill="#1fa6e4"/></svg>
<svg style="left:1683.0px;top:573.0px;" width="33.0" height="33.0" viewBox="0 0 33.0 33.0"><defs><radialGradient id="gg1699" cx=".45" cy=".35" r=".75"><stop offset="0" stop-color="#6fd0ee"/><stop offset=".6" stop-color="#3aa3d4"/><stop offset="1" stop-color="#2b86bd"/></radialGradient></defs><path d="M14.11 6.55L14.60 2.33L18.40 2.33L18.89 6.55L21.85 7.78L25.18 5.13L27.87 7.82L25.22 11.15L26.45 14.11L30.67 14.60L30.67 18.40L26.45 18.89L25.22 21.85L27.87 25.18L25.18 27.87L21.85 25.22L18.89 26.45L18.40 30.67L14.60 30.67L14.11 26.45L11.15 25.22L7.82 27.87L5.13 25.18L7.78 21.85L6.55 18.89L2.33 18.40L2.33 14.60L6.55 14.11L7.78 11.15L5.13 7.82L7.82 5.13L11.15 7.78Z" fill="url(#gg1699)" stroke="url(#gg1699)" stroke-width="2.4" stroke-linejoin="round"/><circle cx="16.5" cy="16.5" r="3.88" fill="#f6fafc" stroke="#2a7fb2" stroke-width=".9"/></svg>
<svg style="left:1841px;top:573px;" width="30" height="30" viewBox="0 0 30 30"><path d="M22.4 9.2A10.4 10.4 0 1 0 24.3 21.5" fill="none" stroke="#c2c6d1" stroke-width="7.4"/><path d="M16.3 12.6H28.6V.6Z" fill="#eceef3" stroke="#c2c6d1" stroke-width="1.3" stroke-linejoin="round"/><path d="M22.6 9.6A10.4 10.4 0 1 0 24.1 21.1" fill="none" stroke="#eef0f5" stroke-width="5"/><path d="M18.5 11.6H27.6V3Z" fill="#eef0f5"/></svg>
<div style="left:1030px;top:615px;width:25.5px;height:25.5px;background:#fff;border:2px solid #b1b1b1;border-radius:6px;"></div>
<svg style="left:1070px;top:613px;" width="36" height="32" viewBox="0 0 36 32"><path d="M5 17V30.6H32.5V17L18.5 5Z" fill="#eceef0" stroke="#b9bcbf" stroke-width="1"/><path d="M5 28H32.5V31H5Z" fill="#a3a6a9"/><rect x="14.3" y="17.5" width="8.2" height="11.5" fill="#b7693a"/><path d="M2 19.5L18.5 3.2L35 19.5" fill="none" stroke="#c9301c" stroke-width="3.6" stroke-linejoin="miter"/></svg>
<svg style="left:1193px;top:621px;" width="12" height="18" viewBox="0 0 12 18"><path d="M1.5 1L10.5 9L1.5 17" fill="none" stroke="#c3c6c9" stroke-width="2"/></svg>
<svg style="left:1796.5px;top:613.5px;" width="30" height="31" viewBox="0 0 29.6 29.8"><path d="M14.8 .4L29.2 5.9V23.3L14.8 29.4L.4 23.3V5.9Z" fill="#b9e4f7" stroke="#74c4de" stroke-width=".9" stroke-linejoin="round"/><path d="M14.8 .4L29.2 5.9L14.8 11.6L.4 5.9Z" fill="#c9ebf9" stroke="#7fc9e1" stroke-width=".6"/><path d="M.4 23.3L14.8 18L29.2 23.3L14.8 29.4Z" fill="#a5dbf1" opacity=".7"/><path d="M14.8 .4V29.4M.4 23.3L14.8 18L29.2 23.3" fill="none" stroke="#6cc0da" stroke-width=".8"/><text transform="translate(15.2 19) scale(.82 1)" font-family="Liberation Serif,serif" font-size="22" text-anchor="middle" fill="#3a7bbd" stroke="#3a7bbd" stroke-width=".35" opacity=".92">R</text></svg>
<svg style="left:1144px;top:662.5px;" width="20" height="13.5" viewBox="0 0 20 13.5"><path d="M0 13.5H20L10 0Z" fill="#82868f"/></svg>
<svg style="left:1095px;top:695px;" width="28" height="28" viewBox="0 0 28 28"><defs><linearGradient id="upg" x1="0" y1="0" x2="1" y2="0"><stop offset="0" stop-color="#2ab673"/><stop offset=".5" stop-color="#4fd592"/><stop offset="1" stop-color="#2ab673"/></linearGradient></defs><path d="M11 1L21 12.5H14.8V20H27V26.6H7.5V12.5H1.2Z" fill="url(#upg)" stroke="#1f9e5f" stroke-width="1.1" stroke-linejoin="round"/></svg>
<div style="left:1038.2px;top:743.2px;width:25.6px;height:25.6px;background:#fff;border:2px solid #adadad;border-radius:6.5px;"></div>
<div style="left:1038.2px;top:789.3px;width:25.6px;height:25.6px;background:#fff;border:2px solid #adadad;border-radius:6.5px;"></div>
<svg style="left:1093px;top:739px;" width="32" height="32" viewBox="0 0 32 32"><path d="M5.5 1.6H21.5L30.5 10.5V30.5H5.5Z" fill="#fff" stroke="#a9acaf" stroke-width="1.2" stroke-linejoin="round"/><path d="M21.5 1.6V10.5H30.5" fill="#f1f2f3" stroke="#b9bcbf" stroke-width="1" stroke-linejoin="round"/><path d="M10.8 5.8L20.8 15.8L10.8 25.8L0.8 15.8Z" fill="#e9512f"/><path d="M9 9L10.8 11.5V21M10.8 13L14.8 17" fill="none" stroke="#fff" stroke-width="1.5"/><circle cx="10.8" cy="21" r="1.6" fill="#fff"/><circle cx="14.8" cy="17" r="1.6" fill="#fff"/><circle cx="10.8" cy="11.5" r="1.4" fill="#fff"/></svg>
<svg style="left:1094.6px;top:788.3px;" width="29.8" height="29.8" viewBox="0 0 29.6 29.8"><path d="M14.8 .4L29.2 5.9V23.3L14.8 29.4L.4 23.3V5.9Z" fill="#b9e4f7" stroke="#74c4de" stroke-width=".9" stroke-linejoin="round"/><path d="M14.8 .4L29.2 5.9L14.8 11.6L.4 5.9Z" fill="#c9ebf9" stroke="#7fc9e1" stroke-width=".6"/><path d="M.4 23.3L14.8 18L29.2 23.3L14.8 29.4Z" fill="#a5dbf1" opacity=".7"/><path d="M14.8 .4V29.4M.4 23.3L14.8 18L29.2 23.3" fill="none" stroke="#6cc0da" stroke-width=".8"/><text transform="translate(15.2 19) scale(.82 1)" font-family="Liberation Serif,serif" font-size="22" text-anchor="middle" fill="#3a7bbd" stroke="#3a7bbd" stroke-width=".35" opacity=".92">R</text></svg>
<svg style="left:27.5px;top:727px;" width="28.5" height="24" viewBox="0 0 28.5 24"><path d="M1 12.0L13.110000000000001 1V7.48H27.5V16.52H13.110000000000001V23Z" fill="#dce8f2" stroke="#cfdae3" stroke-width="1.3" stroke-linejoin="round"/></svg>
<svg style="left:78px;top:727px;" width="27" height="24" viewBox="0 0 27 24"><path d="M1 12.0L12.42 1V7.48H26V16.52H12.42V23Z" fill="#e3ecf4" stroke="#d5dfe7" stroke-width="1.3" stroke-linejoin="round" transform="translate(27,0) scale(-1,1)"/></svg>
<svg style="left:269.9px;top:682.2px;" width="14.6" height="14.6" viewBox="0 0 14.6 14.6"><path d="M2 2L12.6 12.6M12.6 2L2 12.6" stroke="#bfc2c4" stroke-width="3.6"/></svg>
<svg style="left:384.2px;top:682.2px;" width="14.6" height="14.6" viewBox="0 0 14.6 14.6"><path d="M2 2L12.6 12.6M12.6 2L2 12.6" stroke="#bfc2c4" stroke-width="3.6"/></svg>
<svg style="left:980.3px;top:730.5px;" width="13.4" height="13.4" viewBox="0 0 13.4 13.4"><path d="M2 2L11.4 11.4M11.4 2L2 11.4" stroke="#9b9ea1" stroke-width="3.6"/></svg>
<svg style="left:929px;top:720px;" width="40" height="33" viewBox="0 0 40 33"><path d="M37.2 2.2L23.5 17" stroke="#b4b7ba" stroke-width="3.4" stroke-linecap="round"/><path d="M37.2 2.2L23.5 17" stroke="#f4f6f7" stroke-width="1.5" stroke-linecap="round"/><path d="M18 15.5Q22 14.5 25.5 18.5Q25.5 24 21 31Q17 29 15.5 31Q13 28.5 10.5 30.5Q8 28.5 5.5 29.5Q3.5 28.5 1.5 27.5Q11 24 18 15.5Z" fill="#dcdee0" stroke="#bcbfc2" stroke-width="1"/><path d="M18.5 17.5L24.5 22M17 19.5L23.5 24.5" stroke="#bcbfc2" stroke-width=".9"/></svg>
<svg style="left:978.8px;top:771.8px;" width="16.4" height="8.4" viewBox="0 0 16.4 8.4"><path d="M0 8.4H16.4L8.2 0Z" fill="#a4a4a4"/></svg>
<svg style="left:978.8px;top:1280px;" width="16.4" height="8.4" viewBox="0 0 16.4 8.4"><path d="M0 0H16.4L8.2 8.4Z" fill="#a4a4a4"/></svg>
<svg style="left:264px;top:628px;" width="11" height="15" viewBox="0 0 11 15"><path d="M0 9.5H11L5.5 15Z" fill="#6b7075"/><path d="M0 5.5H11L5.5 0Z" fill="#6b7075"/></svg>
<svg style="left:981px;top:627px;" width="11" height="16" viewBox="0 0 11 16"><path d="M0 10H11L5.5 16Z" fill="#6b7075"/><path d="M0 6H11L5.5 0Z" fill="#6b7075"/></svg>
<svg style="left:1769px;top:25px;" width="34" height="28" viewBox="0 0 34 28"><rect x="2.2" y="2.2" width="19.6" height="23.4" rx="4" fill="#fdfdfe" stroke="#9ba9c0" stroke-width="2"/><path d="M15 10.8H23V6.8L32 14L23 21.2V17.2H15Z" fill="#90a5bb"/></svg>
<svg style="left:1839.5px;top:25.3px;" width="28" height="28" viewBox="0 0 28 28"><circle cx="13.5" cy="13.5" r="13.2" fill="#e8814b"/><circle cx="13.5" cy="13.5" r="11.6" fill="none" stroke="#f3a878" stroke-width="1"/><path d="M9 7.8A8 8 0 1 0 18 7.8" fill="none" stroke="#fff" stroke-width="1.7" stroke-linecap="round"/><path d="M13.5 4.5V13" stroke="#fff" stroke-width="1.9" stroke-linecap="round"/></svg>
<div style="left:1452px;top:114px;width:172px;height:85px;border:10px solid #ed1c24;border-radius:28px;"></div>
<div style="left:81px;top:621px;width:303px;height:123px;border:10px solid #ed1c24;border-radius:28px;"></div>
</body></html>
